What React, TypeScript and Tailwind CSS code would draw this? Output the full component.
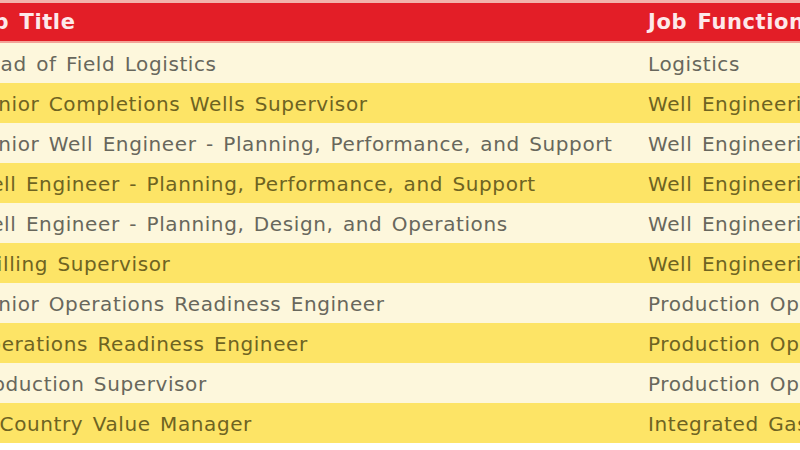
const rows = [
  { title: 'Head of Field Logistics', fn: 'Logistics' },
  { title: 'Senior Completions Wells Supervisor', fn: 'Well Engineering' },
  { title: 'Senior Well Engineer - Planning, Performance, and Support', fn: 'Well Engineering' },
  { title: 'Well Engineer - Planning, Performance, and Support', fn: 'Well Engineering' },
  { title: 'Well Engineer - Planning, Design, and Operations', fn: 'Well Engineering' },
  { title: 'Drilling Supervisor', fn: 'Well Engineering' },
  { title: 'Senior Operations Readiness Engineer', fn: 'Production Operations' },
  { title: 'Operations Readiness Engineer', fn: 'Production Operations' },
  { title: 'Production Supervisor', fn: 'Production Operations' },
  { title: 'In-Country Value Manager', fn: 'Integrated Gas' },
]

export default function App() {
  return (
    <div className="w-[800px] h-[450px] overflow-hidden bg-white font-['DejaVu_Sans',sans-serif] tracking-[0.6px] [word-spacing:2.5px]">
      <div className="h-[3px] bg-[#f2b3ab]" />
      <div className="flex h-[38px] items-center bg-[#e31e27] pt-[2px] text-[21px] font-bold text-[#fde9ea]">
        <div className="w-[648px] shrink-0 overflow-hidden">
          <div className="ml-[-30px] whitespace-nowrap">Job Title</div>
        </div>
        <div className="whitespace-nowrap">Job Function</div>
      </div>
      <div className="h-[2px] bg-[#f3a398]" />
      {rows.map((row, i) => {
        const yellow = i % 2 === 1
        return (
          <div
            key={row.title}
            className={
              yellow
                ? 'flex h-[40px] items-center bg-[#fde466] pt-[2px] text-[20px] text-[#6e6322]'
                : 'flex h-[40px] items-center bg-[#fdf7dc] pt-[2px] text-[20px] text-[#68675c]'
            }
          >
            <div className="w-[648px] shrink-0 overflow-hidden">
              <div className="ml-[-28px] whitespace-nowrap">{row.title}</div>
            </div>
            <div className="whitespace-nowrap">{row.fn}</div>
          </div>
        )
      })}
    </div>
  )
}
